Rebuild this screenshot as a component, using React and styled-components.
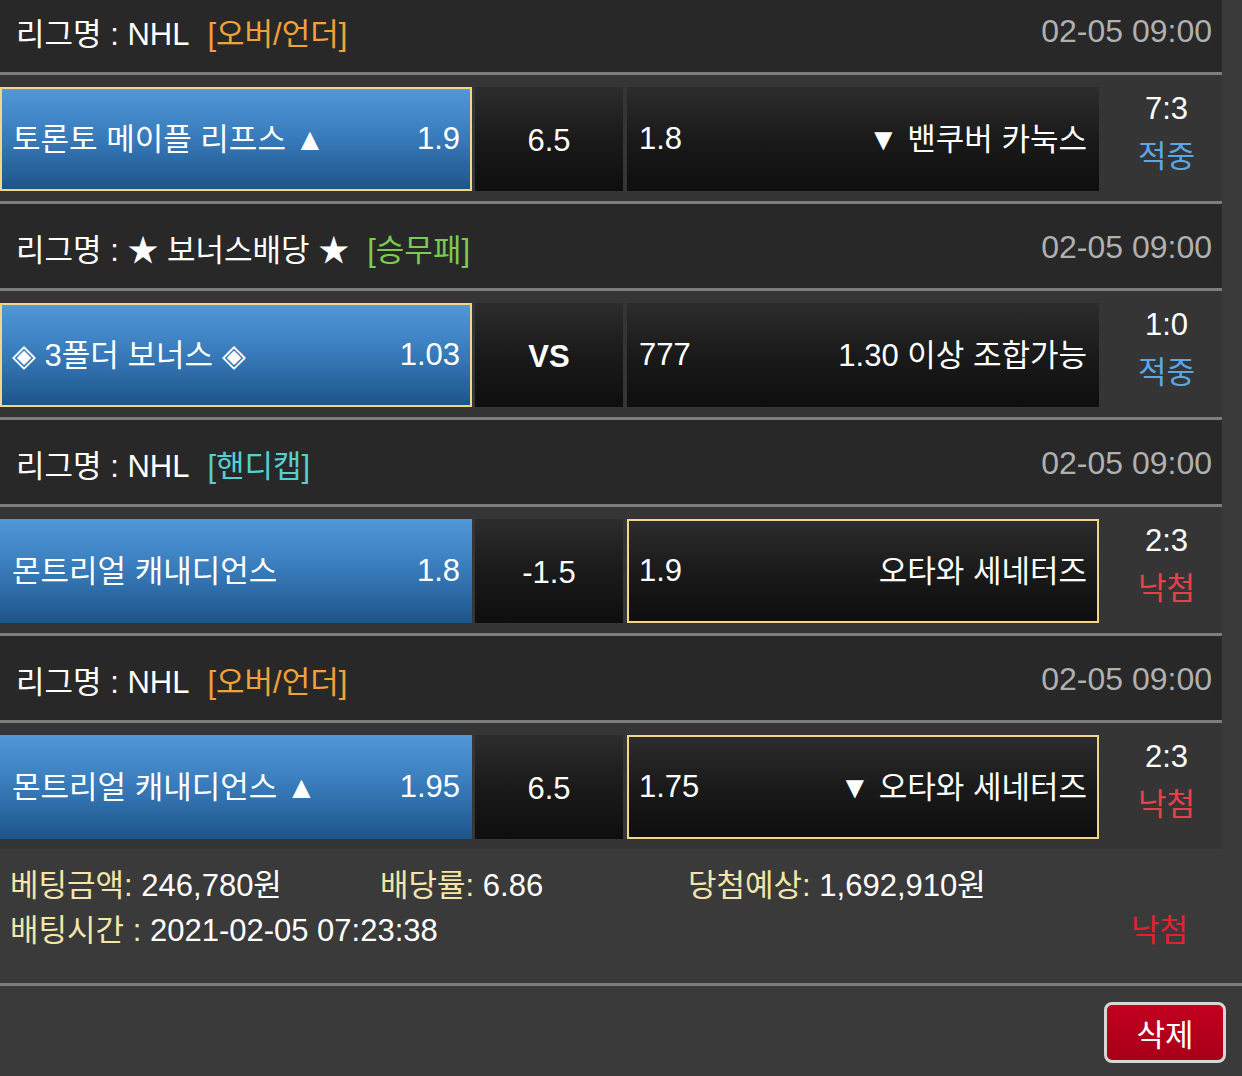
import React from 'react';
import styled, { createGlobalStyle } from 'styled-components';

const GlobalStyle = createGlobalStyle`
  html, body {
    margin: 0;
    padding: 0;
    background: #3a3a3a;
  }
  body {
    font-family: "Liberation Sans", "Noto Sans CJK KR", sans-serif;
    color: #fff;
    overflow: hidden;
  }
`;

const Page = styled.div`
  width: 1242px;
  height: 1076px;
  overflow: hidden;
  background: #3a3a3a;
`;

// la lista esta desplazada un poco hacia arriba
const List = styled.div`
  width: 1222px;
  margin-top: -12px;
  background: #353535;
`;

const LeagueHeader = styled.div`
  height: 87px;
  display: flex;
  align-items: center;
  justify-content: space-between;
  padding: 2px 10px 0 16px;
  background: #282828;
  border-bottom: 3px solid #7d7d7d;
  font-size: 31px;
  box-sizing: border-box;
`;

const LeagueName = styled.div`
  display: flex;
  align-items: center;
  gap: 18px;
`;

const Category = styled.span`
  color: ${p => p.$color};
`;

const DateText = styled.span`
  color: #b0b0b0;
  font-size: 32px;
`;

const GameRow = styled.div`
  display: flex;
  align-items: stretch;
  padding: 12px 0 10px;
  border-bottom: 3px solid #7d7d7d;
  &:last-child {
    border-bottom: none;
  }
`;

const TeamCell = styled.div`
  width: 472px;
  height: 104px;
  box-sizing: border-box;
  display: flex;
  align-items: center;
  justify-content: space-between;
  padding: 0 ${p => (p.$selected ? 10 : 12)}px 6px;
  font-size: 31px;
  border: ${p => (p.$selected ? '2px solid #f3d58a' : 'none')};
  background: ${p => (p.$home
    ? 'linear-gradient(to bottom, #5098d9 0%, #3a7dbd 45%, #1d558a 100%)'
    : 'linear-gradient(to bottom, #2c2c2c 0%, #1a1a1a 50%, #0e0e0e 100%)')};
`;

const Odds = styled.span`
  margin-top: 5px;
`;

const HandiCell = styled.div`
  width: 148px;
  height: 104px;
  margin: 0 4px 0 3px;
  display: flex;
  align-items: center;
  justify-content: center;
  padding-top: 4px;
  box-sizing: border-box;
  font-size: 31px;
  font-weight: ${p => (p.$bold ? 700 : 400)};
  background: linear-gradient(to bottom, #2c2c2c 0%, #1a1a1a 50%, #0e0e0e 100%);
`;

const ResultCell = styled.div`
  flex: 1;
  display: flex;
  flex-direction: column;
  align-items: center;
  justify-content: center;
  gap: 4px;
  font-size: 31px;
  padding: 0 0 12px 12px;
`;

const ResultLabel = styled.span`
  color: ${p => (p.$win ? '#5aa7e6' : '#e8404a')};
`;

const Summary = styled.div`
  padding: 14px 54px 30px 10px;
  display: flex;
  flex-direction: column;
  font-size: 31px;
  line-height: 45px;
  border-bottom: 3px solid #7d7d7d;
`;

const SummaryLine = styled.div`
  display: flex;
  align-items: center;
  justify-content: ${p => (p.$spread ? 'space-between' : 'flex-start')};
`;

const SummaryItem = styled.span`
  width: ${p => p.$width || 'auto'};
`;

const Label = styled.span`
  color: #f3e6a8;
`;

const LostMark = styled.span`
  color: #e0232c;
`;

const Footer = styled.div`
  display: flex;
  justify-content: flex-end;
  padding: 16px 16px;
`;

const DeleteButton = styled.button`
  width: 122px;
  height: 61px;
  border: 3px solid #d6d6d6;
  border-radius: 8px;
  background: linear-gradient(to bottom, #c2001f, #a80018);
  color: #fff;
  font-family: inherit;
  font-size: 31px;
  cursor: pointer;
`;

const games = [
  {
    league: 'NHL', cat: '[오버/언더]', catColor: '#f0a23a',
    home: '토론토 메이플 리프스 ▲', homeOdds: '1.9', handi: '6.5',
    awayOdds: '1.8', away: '▼ 밴쿠버 카눅스', pick: 'home',
    score: '7:3', win: true,
  },
  {
    league: '★ 보너스배당 ★', cat: '[승무패]', catColor: '#7acb4f',
    home: '◈ 3폴더 보너스 ◈', homeOdds: '1.03', handi: 'VS', bold: true,
    awayOdds: '777', away: '1.30 이상 조합가능', pick: 'home',
    score: '1:0', win: true,
  },
  {
    league: 'NHL', cat: '[핸디캡]', catColor: '#55cfcf',
    home: '몬트리얼 캐내디언스', homeOdds: '1.8', handi: '-1.5',
    awayOdds: '1.9', away: '오타와 세네터즈', pick: 'away',
    score: '2:3', win: false,
  },
  {
    league: 'NHL', cat: '[오버/언더]', catColor: '#f0a23a',
    home: '몬트리얼 캐내디언스 ▲', homeOdds: '1.95', handi: '6.5',
    awayOdds: '1.75', away: '▼ 오타와 세네터즈', pick: 'away',
    score: '2:3', win: false,
  },
];

function Game({ g }) {
  return (
    <>
      <LeagueHeader>
        <LeagueName>
          <span>리그명 : {g.league}</span>
          <Category $color={g.catColor}>{g.cat}</Category>
        </LeagueName>
        <DateText>02-05 09:00</DateText>
      </LeagueHeader>
      <GameRow>
        <TeamCell $home $selected={g.pick === 'home'}>
          <span>{g.home}</span>
          <Odds>{g.homeOdds}</Odds>
        </TeamCell>
        <HandiCell $bold={g.bold}>{g.handi}</HandiCell>
        <TeamCell $selected={g.pick === 'away'}>
          <Odds>{g.awayOdds}</Odds>
          <span>{g.away}</span>
        </TeamCell>
        <ResultCell>
          <span>{g.score}</span>
          <ResultLabel $win={g.win}>{g.win ? '적중' : '낙첨'}</ResultLabel>
        </ResultCell>
      </GameRow>
    </>
  );
}

export default function App() {
  return (
    <Page>
      <GlobalStyle />
      <List>
        {games.map((g, i) => <Game key={i} g={g} />)}
      </List>
      <Summary>
        <SummaryLine>
          <SummaryItem $width="370px"><Label>베팅금액:</Label> 246,780원</SummaryItem>
          <SummaryItem $width="308px"><Label>배당률:</Label> 6.86</SummaryItem>
          <SummaryItem><Label>당첨예상:</Label> 1,692,910원</SummaryItem>
        </SummaryLine>
        <SummaryLine $spread>
          <SummaryItem><Label>배팅시간 :</Label> 2021-02-05 07:23:38</SummaryItem>
          <LostMark>낙첨</LostMark>
        </SummaryLine>
      </Summary>
      <Footer>
        <DeleteButton>삭제</DeleteButton>
      </Footer>
    </Page>
  );
}
